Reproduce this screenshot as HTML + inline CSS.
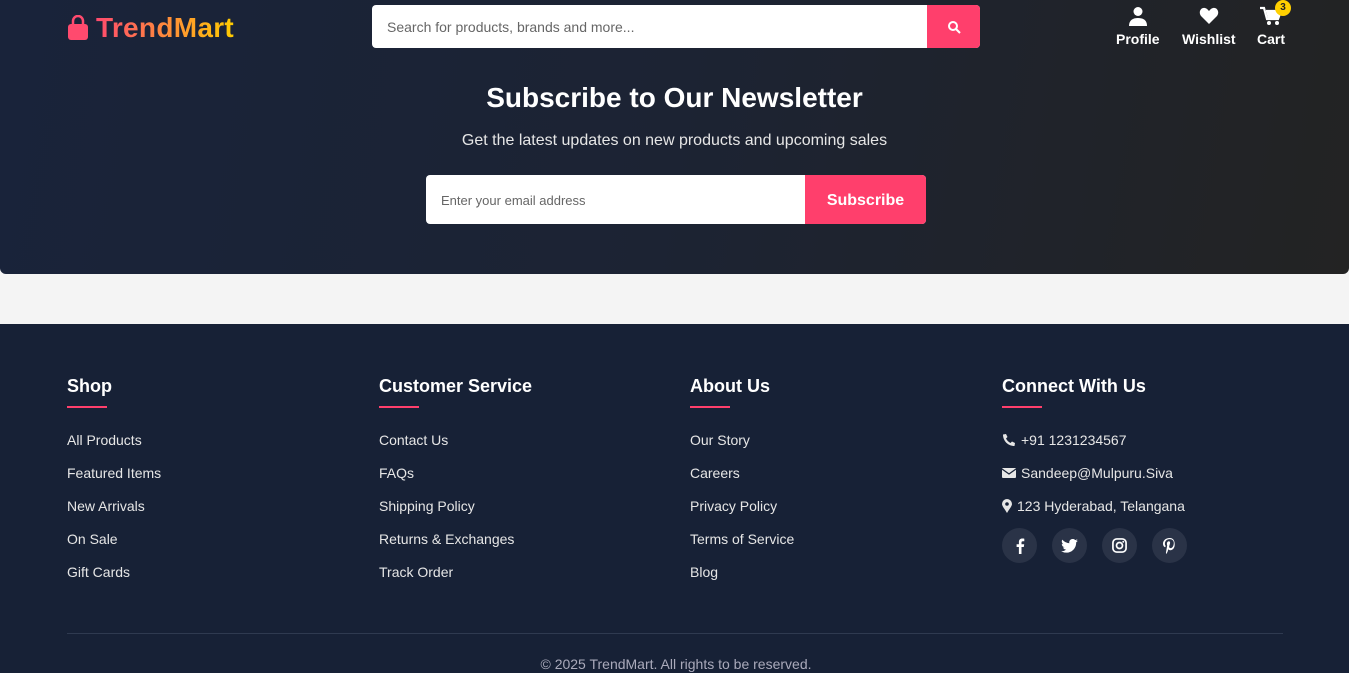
<!DOCTYPE html>
<html><head><meta charset="utf-8"><style>
*{box-sizing:border-box;margin:0;padding:0}
body{width:1349px;height:673px;overflow:hidden;font-family:"Liberation Sans",sans-serif;background:#f4f4f4;position:relative}
.top{position:absolute;left:0;top:0;width:1349px;height:274px;background:linear-gradient(100deg,#19233a 0%,#1c2333 50%,#232323 100%);border-radius:0 0 6px 6px}
.logo{position:absolute;left:67px;top:12px;display:flex;align-items:center;gap:7px}
.logo span{font-size:28px;font-weight:bold;letter-spacing:0.3px;background:linear-gradient(90deg,#ff4a6e,#ff8a3c 50%,#ffcc00);-webkit-background-clip:text;color:transparent}
.search{position:absolute;left:372px;top:5px;width:608px;height:43px;background:#fff;border-radius:4px;overflow:hidden}
.search .ph{position:absolute;left:15px;top:14px;font-size:14px;color:#666}
.search .btn{position:absolute;right:0;top:0;width:53px;height:43px;background:#ff3f6c;display:flex;align-items:center;justify-content:center}
.nav{position:absolute;top:6px;color:#fff;font-weight:bold;font-size:14px;text-align:center}
.nav svg{display:block;margin:0 auto 5px}
.badge{position:absolute;left:18px;top:-6px;width:16px;height:16px;border-radius:50%;background:#ffd000;color:#222;font-size:10px;line-height:16px;text-align:center}
h2{position:absolute;left:0;width:1349px;text-align:center;top:82px;color:#fff;font-size:28px}
.sub{position:absolute;left:0;width:1349px;text-align:center;top:132px;color:#e6e6e6;font-size:16px}
.email{position:absolute;left:426px;top:175px;width:500px;height:49px;background:#fff;border-radius:4px;overflow:hidden}
.email .ph{position:absolute;left:15px;top:18px;font-size:13px;color:#666}
.email .btn{position:absolute;right:0;top:0;width:121px;height:49px;background:#ff3f6c;color:#fff;font-weight:bold;font-size:16px;text-align:center;line-height:51px}
footer{position:absolute;left:0;top:324px;width:1349px;height:349px;background:#172136;color:#fff}
.col{position:absolute;top:52px}
.col h3{font-size:18px;font-weight:bold}
.col .ul{width:40px;height:2px;background:#ff3f6c;margin-top:9px;margin-bottom:24px}
.col p{font-size:14px;color:#e6e6e6;height:33px;display:flex;align-items:flex-start;gap:5px}
.soc{display:flex;gap:15px;margin-top:-3px}
.soc div{width:35px;height:35px;border-radius:50%;background:#2a3347;display:flex;align-items:center;justify-content:center}
.hr{position:absolute;left:67px;top:309px;width:1216px;height:1px;background:#2f3a50}
.copy{position:absolute;left:0;width:1352px;text-align:center;top:332px;font-size:14px;color:#aab}
</style></head><body>
<div class="top">
<div class="logo"><svg width="22" height="26" viewBox="0 0 22 26"><path d="M6 9V6a5 5 0 0 1 10 0v3" stroke="#ff4a6e" stroke-width="2.5" fill="none"/><rect x="1" y="9" width="20" height="16" rx="3" fill="#ff4a6e"/></svg><span>TrendMart</span></div>
<div class="search"><div class="ph">Search for products, brands and more...</div><div class="btn"><svg width="14" height="14" viewBox="0 0 14 14"><circle cx="6" cy="6" r="4" stroke="#fff" stroke-width="2" fill="none"/><path d="M9 9l4 4" stroke="#fff" stroke-width="2"/></svg></div></div>
<div class="nav" style="left:1116px"><svg width="20" height="20" viewBox="0 0 20 20"><circle cx="10" cy="5.5" r="4.5" fill="#fff"/><path d="M1 20c0-6 4-8 9-8s9 2 9 8z" fill="#fff"/></svg>Profile</div>
<div class="nav" style="left:1182px"><svg width="20" height="20" viewBox="0 0 20 20"><path d="M10 18L2 10C-1 6 2 1 6 2c2 .4 3 2 4 3 1-1 2-2.6 4-3 4-1 7 4 4 8z" fill="#fff"/></svg>Wishlist</div>
<div class="nav" style="left:1257px"><svg width="22" height="20" viewBox="0 0 22 20"><path d="M0 2h4l3 11h11l3-8H6" fill="none" stroke="#fff" stroke-width="2.2"/><path d="M6 5h15l-3 8H8z" fill="#fff"/><circle cx="9" cy="17" r="2" fill="#fff"/><circle cx="17" cy="17" r="2" fill="#fff"/></svg>Cart<div class="badge">3</div></div>
<h2>Subscribe to Our Newsletter</h2>
<div class="sub">Get the latest updates on new products and upcoming sales</div>
<div class="email"><div class="ph">Enter your email address</div><div class="btn">Subscribe</div></div>
</div>
<footer>
<div class="col" style="left:67px"><h3>Shop</h3><div class="ul"></div><p>All Products</p><p>Featured Items</p><p>New Arrivals</p><p>On Sale</p><p>Gift Cards</p></div>
<div class="col" style="left:379px"><h3>Customer Service</h3><div class="ul"></div><p>Contact Us</p><p>FAQs</p><p>Shipping Policy</p><p>Returns &amp; Exchanges</p><p>Track Order</p></div>
<div class="col" style="left:690px"><h3>About Us</h3><div class="ul"></div><p>Our Story</p><p>Careers</p><p>Privacy Policy</p><p>Terms of Service</p><p>Blog</p></div>
<div class="col" style="left:1002px"><h3>Connect With Us</h3><div class="ul"></div>
<p><svg width="14" height="14" viewBox="0 0 14 14" style="margin-top:1px"><path d="M13 10l-3-1.5-1.5 1.5C6.5 9 5 7.5 4 5.5L5.5 4 4 1 1 1.5C1 8 6 13 12.5 13z" fill="#e6e6e6"/></svg>+91 1231234567</p>
<p><svg width="14" height="12" viewBox="0 0 14 12" style="margin-top:2px"><rect x="0" y="1" width="14" height="10" rx="1" fill="#e6e6e6"/><path d="M0 2l7 5 7-5" stroke="#172136" stroke-width="1.3" fill="none"/></svg>Sandeep@Mulpuru.Siva</p>
<p><svg width="10" height="14" viewBox="0 0 10 14" style="margin-top:1px"><path d="M5 14C2 9 0 7 0 5a5 5 0 0 1 10 0c0 2-2 4-5 9z" fill="#e6e6e6"/><circle cx="5" cy="5" r="1.8" fill="#172136"/></svg>123 Hyderabad, Telangana</p>
<div class="soc">
<div><svg width="10" height="16" viewBox="0 0 10 16"><path d="M6.5 16V9h2.3l.4-2.8H6.5V4.5c0-.8.3-1.3 1.4-1.3H9.3V.7C9 .6 8.2.5 7.3.5 5.3.5 3.9 1.7 3.9 4v2.2H1.6V9h2.3v7z" fill="#fff"/></svg></div>
<div><svg width="17" height="14" viewBox="0 0 24 20"><path d="M24 2.3a10 10 0 0 1-2.8.8A5 5 0 0 0 23.3.4a10 10 0 0 1-3.1 1.2A4.9 4.9 0 0 0 11.8 6 14 14 0 0 1 1.7.9a4.9 4.9 0 0 0 1.5 6.6 4.9 4.9 0 0 1-2.2-.6 4.9 4.9 0 0 0 3.9 4.8 4.9 4.9 0 0 1-2.2.1 4.9 4.9 0 0 0 4.6 3.4A9.9 9.9 0 0 1 0 17.3 14 14 0 0 0 7.5 19.5c9 0 14-7.5 14-14v-.6A10 10 0 0 0 24 2.300z" fill="#fff"/></svg></div>
<div><svg width="15" height="15" viewBox="0 0 16 16"><rect x="1" y="1" width="14" height="14" rx="4" stroke="#fff" stroke-width="1.8" fill="none"/><circle cx="8" cy="8" r="3.2" stroke="#fff" stroke-width="1.8" fill="none"/><circle cx="12" cy="4" r="1" fill="#fff"/></svg></div>
<div><svg width="13" height="16" viewBox="0 0 13 16"><path d="M6.8 0C2.4 0 0 2.9 0 5.6c0 1.6.6 3 1.9 3.5.2.1.4 0 .5-.2l.2-.8c.1-.2 0-.3-.1-.5-.4-.5-.6-1.100-.6-1.9 0-2.5 1.8-4.6 4.8-4.6 2.6 0 4.1 1.6 4.1 3.8 0 2.8-1.3 5.2-3.1 5.2-1 0-1.8-.8-1.5-1.9.3-1.2.9-2.6.9-3.5 0-.8-.4-1.5-1.300-1.5-1.1 0-1.9 1.1-1.9 2.6 0 .9.3 1.6.3 1.6L3.1 13.6c-.3 1.3 0 2.3.1 2.4h.1c.1-.2 1-1.4 1.4-2.6l.6-2.2c.3.5 1.1 1 2 1 2.6 0 4.400-2.4 4.400-5.6C11.8 2.3 9.9 0 6.8 0z" fill="#fff"/></svg></div>
</div></div>
<div class="hr"></div>
<div class="copy">© 2025 TrendMart. All rights to be reserved.</div>
</footer>
</body></html>
